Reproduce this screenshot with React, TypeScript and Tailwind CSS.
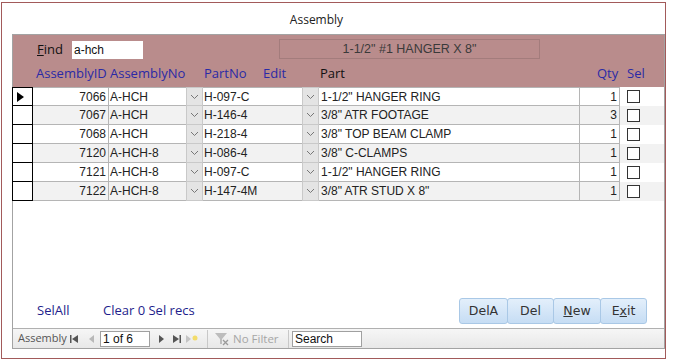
import React from 'react';

type Row = { id: number; asm: string; partNo: string; part: string; qty: number };

const rows: Row[] = [
  { id: 7066, asm: 'A-HCH', partNo: 'H-097-C', part: '1-1/2" HANGER RING', qty: 1 },
  { id: 7067, asm: 'A-HCH', partNo: 'H-146-4', part: '3/8" ATR FOOTAGE', qty: 3 },
  { id: 7068, asm: 'A-HCH', partNo: 'H-218-4', part: '3/8" TOP BEAM CLAMP', qty: 1 },
  { id: 7120, asm: 'A-HCH-8', partNo: 'H-086-4', part: '3/8" C-CLAMPS', qty: 1 },
  { id: 7121, asm: 'A-HCH-8', partNo: 'H-097-C', part: '1-1/2" HANGER RING', qty: 1 },
  { id: 7122, asm: 'A-HCH-8', partNo: 'H-147-4M', part: '3/8" ATR STUD X 8"', qty: 1 },
];

const dataFont = "font-['Liberation_Sans',Arial,sans-serif] text-[12px]";
const labelFont = "font-['Open_Sans','Noto_Sans',sans-serif] text-[13px]";
const navFont = "font-['Open_Sans','Noto_Sans',sans-serif] text-[11px]";

const DropBtn: React.FC<{ first: boolean }> = ({ first }) => (
  <div
    className={`w-[17px] bg-[#e4e4e4] border-x border-b border-[#c9c9c9] flex items-center justify-center ${first ? 'border-t' : ''}`}
  >
    <svg width="9" height="6" viewBox="0 0 9 6">
      <polyline points="1,1 4.5,4.5 8,1" fill="none" stroke="#777" strokeWidth="1" />
    </svg>
  </div>
);

const GridRow: React.FC<{ r: Row; i: number }> = ({ r, i }) => {
  const first = i === 0;
  const bg = i % 2 === 0 ? 'bg-white' : 'bg-[#f2f2f2]';
  const cell = `border-b border-[#b5b5b5] ${first ? 'border-t' : ''}`;
  return (
    <div className={`flex h-[19px] ${bg} ${dataFont} text-[#222] leading-none`}>
      <div
        className={`w-[21px] border-x border-b border-black flex items-center pl-[4px] ${first ? 'border-t' : ''} bg-white`}
      >
        {first && (
          <svg width="7" height="10" viewBox="0 0 7 10">
            <polygon points="0,0 7,5 0,10" fill="#000" />
          </svg>
        )}
      </div>
      <div className={`w-[76px] ${cell} border-r flex items-center justify-end pr-[2px]`}>{r.id}</div>
      <div className={`w-[77px] ${cell} flex items-center pl-[1px]`}>{r.asm}</div>
      <DropBtn first={first} />
      <div className={`w-[99px] ${cell} flex items-center pl-[1px]`}>{r.partNo}</div>
      <DropBtn first={first} />
      <div className={`w-[261px] ${cell} border-r flex items-center pl-[2px]`}>{r.part}</div>
      <div className={`w-[40px] ${cell} border-r flex items-center justify-end pr-[2px]`}>{r.qty}</div>
      <div className="flex-1 flex items-center pl-[7px]">
        <div className="w-[13px] h-[13px] border border-[#333] bg-white" />
      </div>
    </div>
  );
};

const NavSep = () => <div className="w-px h-[18px] bg-[#c8c8c8]" />;

const buttons: { label: React.ReactNode; w: string }[] = [
  { label: 'DelA', w: 'w-[49px]' },
  { label: 'Del', w: 'w-[47px]' },
  {
    label: (
      <>
        <span className="underline">N</span>ew
      </>
    ),
    w: 'w-[48px]',
  },
  {
    label: (
      <>
        E<span className="underline">x</span>it
      </>
    ),
    w: 'w-[47px]',
  },
];

export default function App() {
  return (
    <div className="w-[673px] h-[360px] bg-white overflow-hidden">
      <div className="ml-[1px] mt-[2px] w-[665px] h-[357px] border border-[#a25a5a] flex flex-col">
        <div className="h-[31px] pt-[2px] flex items-center justify-center font-['Open_Sans','Noto_Sans',sans-serif] text-[12px] text-[#222] pr-[34px]">
          Assembly
        </div>

        <div className="ml-[10px] w-[653px] h-[315px] border border-[#a3a3a3] flex flex-col">
          {/* header */}
          <div className="h-[52px] bg-[#b98c8c] flex flex-col">
            <div className="h-[26px] flex items-end pb-[2px]">
              <span className={`${labelFont} text-[#111] ml-[24px] w-[35px]`}>
                <span className="underline">F</span>ind
              </span>
              <div className={`w-[71px] h-[18px] bg-white flex items-center pl-[2px] ${dataFont} text-[#111]`}>
                a-hch
              </div>
              <div
                className={`ml-[136px] w-[261px] h-[20px] border border-[#a37c7c] flex items-center justify-center font-['Liberation_Sans',Arial,sans-serif] text-[12.5px] text-[#3a3a3a]`}
              >
                1-1/2" #1 HANGER X 8"
              </div>
            </div>
            <div className={`h-[26px] flex items-center -ml-px ${labelFont} text-[#2a2aa6] whitespace-nowrap`}>
              <span className="w-[24px]" />
              <span className="w-[74px]">AssemblyID</span>
              <span className="w-[94px]">AssemblyNo</span>
              <span className="w-[59px]">PartNo</span>
              <span className="w-[57px]">Edit</span>
              <span className="w-[277px] text-[#111]">Part</span>
              <span className="w-[30px]">Qty</span>
              <span>Sel</span>
            </div>
          </div>

          {/* detail */}
          <div className="-ml-px flex flex-col">
            {rows.map((r, i) => (
              <GridRow key={r.id} r={r} i={i} />
            ))}
          </div>

          <div className="flex-1" />

          {/* footer */}
          <div className="flex items-center h-[26px] mb-[4px]">
            <span className={`${labelFont} text-[#1e1e8c] ml-[24px] w-[66px]`}>SelAll</span>
            <span className={`${labelFont} text-[#1e1e8c]`}>Clear 0 Sel recs</span>
            <div className="ml-auto mr-[17px] flex font-['DejaVu_Sans',sans-serif] text-[12.5px] text-[#333]">
              {buttons.map((b, i) => (
                <div
                  key={i}
                  className={`h-[26px] ${b.w} flex items-center justify-center border border-[#a9c8e6] rounded-[3px] bg-gradient-to-b from-[#e3effb] to-[#c6ddf4] ${i > 0 ? '-ml-px' : ''}`}
                >
                  {b.label}
                </div>
              ))}
            </div>
          </div>

          {/* navigation bar */}
          <div className={`h-[20px] border-t border-[#b0b0b0] bg-gradient-to-b from-[#f6f6f6] to-[#e8e8e8] flex items-center ${navFont} text-[#555]`}>
            <span className="ml-[5px] w-[52px]">Assembly</span>
            <svg width="8" height="8" viewBox="0 0 8 8">
              <rect x="0" y="0" width="1.5" height="8" fill="#555" />
              <polygon points="8,0 2,4 8,8" fill="#555" />
            </svg>
            <svg className="ml-[11px]" width="5" height="8" viewBox="0 0 5 8">
              <polygon points="5,0 0,4 5,8" fill="#b8b8b8" />
            </svg>
            <div className={`ml-[6px] w-[50px] h-[16px] bg-white border border-[#a0a0a0] flex items-center pl-[2px] ${dataFont} text-[#111]`}>
              1 of 6
            </div>
            <svg className="ml-[9px]" width="5" height="8" viewBox="0 0 5 8">
              <polygon points="0,0 5,4 0,8" fill="#555" />
            </svg>
            <svg className="ml-[9px]" width="8" height="8" viewBox="0 0 8 8">
              <polygon points="0,0 6,4 0,8" fill="#555" />
              <rect x="6.5" y="0" width="1.5" height="8" fill="#555" />
            </svg>
            <svg className="ml-[5px]" width="12" height="10" viewBox="0 0 12 10">
              <polygon points="0,1 5,5 0,9" fill="#c4c4c4" />
              <circle cx="9" cy="4" r="2.5" fill="#f3dc6a" />
            </svg>
            <div className="ml-[9px]">
              <NavSep />
            </div>
            <svg className="ml-[7px]" width="15" height="14" viewBox="0 0 15 14">
              <polygon points="0,1 12,1 7,7 7,12 5,12 5,7" fill="#bdbdbd" />
              <path d="M8 8 L13 13 M13 8 L8 13" stroke="#9a9a9a" strokeWidth="1.3" />
            </svg>
            <span className="ml-[3px] w-[55px] text-[11.5px] text-[#a6a6a6]">No Filter</span>
            <NavSep />
            <div className={`ml-[3px] w-[70px] h-[16px] bg-white border border-[#a0a0a0] flex items-center pl-[2px] ${dataFont} text-[#111]`}>
              Search
            </div>
          </div>
        </div>
      </div>
    </div>
  );
}
